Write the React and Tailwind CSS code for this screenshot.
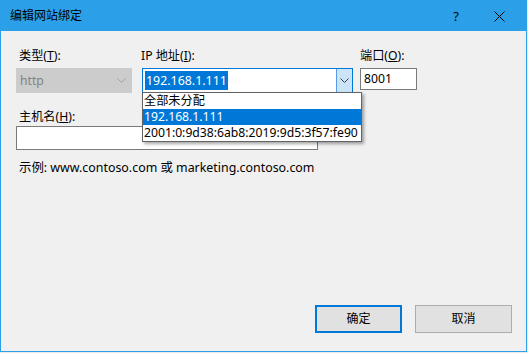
import React from "react";

const font = { fontFamily: '"Noto Sans", "Noto Sans CJK SC", sans-serif' };

function Chevron({ color = "#000" }) {
  return (
    <svg width="9" height="6" viewBox="0 0 9 6" fill="none">
      <path d="M0.5 0.5 L4.5 4.5 L8.5 0.5" stroke={color} strokeWidth="1" />
    </svg>
  );
}

export default function App() {
  return (
    <div className="w-[528px] h-[353px] bg-[#e9e9e9] text-[12.2px] text-black" style={font}>
      <div className="w-[527px] h-[352px] border border-[#2ba0e8] flex flex-col bg-[#f0f0f0]">
        {/* title bar */}
        <div className="h-[30px] bg-[#2ba0e8] flex items-center pl-[9px] shrink-0">
          <span className="leading-[16px] text-[12px]">编辑网站绑定</span>
          <span className="ml-auto mr-[35px] text-[13px] leading-[16px]">?</span>
          <svg className="mr-[21px]" width="11" height="11" viewBox="0 0 11 11">
            <path d="M0.5 0.5 L10.5 10.5 M10.5 0.5 L0.5 10.5" stroke="#000" strokeWidth="1" />
          </svg>
        </div>

        {/* content */}
        <div className="relative flex-1 flex flex-col pl-[15px] pt-[17px]">
          <div className="flex">
            {/* type */}
            <div className="w-[116px] flex flex-col">
              <div className="h-[16px] leading-[16px] pl-[3px]">
                类型(<span className="underline">T</span>):
              </div>
              <div className="mt-[4px] h-[25px] bg-[#cccccc] border border-[#cccccc] flex items-center pl-[3px] pr-[5px]">
                <span className="text-[#838383] leading-[16px]">http</span>
                <span className="ml-auto flex">
                  <Chevron color="#a0a0a0" />
                </span>
              </div>
            </div>
            {/* IP */}
            <div className="ml-[10px] w-[211px] flex flex-col relative">
              <div className="h-[16px] leading-[16px] -ml-[1px]">
                IP 地址(<span className="underline">I</span>):
              </div>
              <div className="mt-[4px] h-[25px] bg-white border border-[#0078d7] flex items-stretch">
                <div className="flex-1 flex items-center pl-[2px]">
                  <span className="bg-[#0078d7] text-white text-[12.4px] leading-[19px] h-[19px] px-[1px]">192.168.1.111</span>
                </div>
                <div className="w-[16px] bg-[#cce4f7] border-l border-[#569de5] flex items-center justify-center">
                  <Chevron color="#404040" />
                </div>
              </div>
              {/* dropdown list overlay */}
              <div className="absolute left-0 top-[44px] w-[220px] h-[50px] bg-white border border-[#646464] shadow-[2px_2px_3px_rgba(0,0,0,0.35)] z-10 flex flex-col">
                <div className="h-[16px] leading-[16px] pl-[1px]">全部未分配</div>
                <div className="h-[16px] leading-[16px] pl-[1px] bg-[#0078d7] text-white">192.168.1.111</div>
                <div className="h-[16px] leading-[16px] pl-[1px]">2001:0:9d38:6ab8:2019:9d5:3f57:fe90</div>
              </div>
            </div>
            {/* port */}
            <div className="ml-[7px] w-[57px] flex flex-col">
              <div className="h-[16px] leading-[16px]">
                端口(<span className="underline">O</span>):
              </div>
              <div className="mt-[4px] h-[22px] bg-white border border-[#7a7a7a] flex items-center pl-[3px]">
                <span className="leading-[16px]">8001</span>
              </div>
            </div>
          </div>

          {/* host */}
          <div className="mt-[16px] h-[16px] leading-[16px] pl-[3px]">
            主机名(<span className="underline">H</span>):
          </div>
          <div className="mt-[1px] w-[302px] h-[24px] bg-white border border-[#7a7a7a]"></div>

          <div className="mt-[10px] h-[16px] leading-[16px] pl-[3px] text-[12.4px]">
            示例: www.contoso.com 或 marketing.contoso.com
          </div>

          {/* buttons */}
          <div className="mt-auto flex justify-end gap-[13px] pr-[14px] pb-[18px]">
            <button className="w-[87px] h-[28px] bg-[#e1e1e1] border-2 border-[#0078d7] leading-[16px] text-[12px]" style={font}>
              确定
            </button>
            <button className="w-[97px] h-[28px] bg-[#e1e1e1] border border-[#adadad] leading-[16px] text-[12px]" style={font}>
              取消
            </button>
          </div>
        </div>
      </div>
    </div>
  );
}
